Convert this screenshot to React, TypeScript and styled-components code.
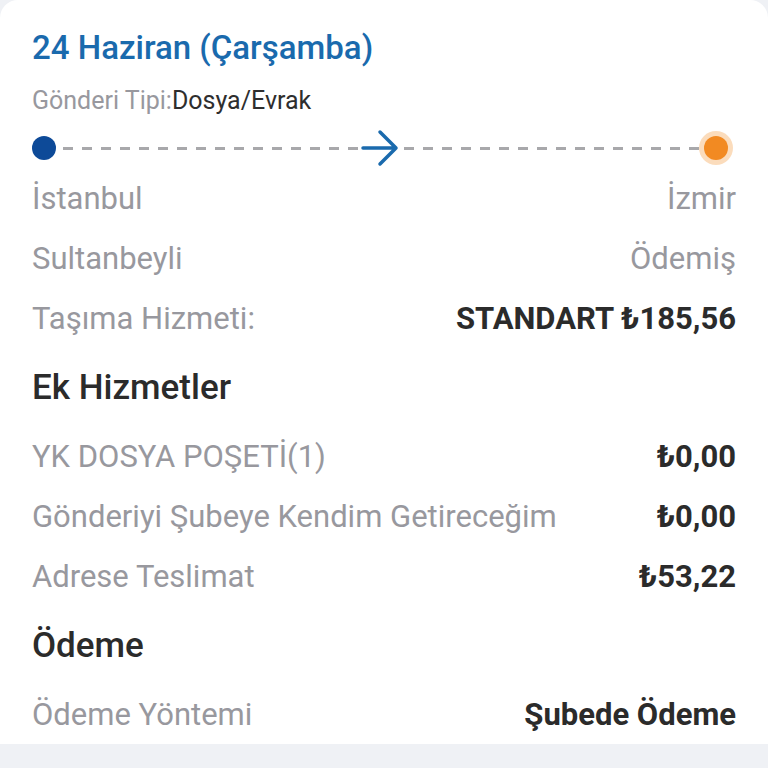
import React from "react";
import styled, { createGlobalStyle } from "styled-components";

const GlobalStyle = createGlobalStyle`
    html, body {
        margin: 0;
        padding: 0;
        background: #eff1f5;
        font-family: Roboto, "Noto Sans", sans-serif;
    }
`;

const Page = styled.div`
    width: 768px;
    height: 768px;
    overflow: hidden;
    background: #eff1f5;
`;

const Card = styled.div`
    background: #ffffff;
    border-radius: 18px 18px 0 0;
    padding: 22px 32px 0;
    display: flex;
    flex-direction: column;
`;

const Title = styled.h1`
    margin: 0;
    font-size: 33px;
    line-height: 52px;
    font-weight: 500;
    color: #1a6aad;
`;

const SubTitle = styled.div`
    margin-top: 12px;
    height: 30px;
    line-height: 30px;
    font-size: 25px;
    color: #2e2e2e;

    span {
        color: #98989e;
    }
`;

const Timeline = styled.div`
    margin-top: 12px;
    height: 40px;
    display: flex;
    align-items: center;
`;

const Dot = styled.div<{ $color: string; $halo?: string }>`
    width: 24px;
    height: 24px;
    border-radius: 50%;
    flex-shrink: 0;
    background: ${(p) => p.$color};
    box-shadow: ${(p) => (p.$halo ? `0 0 0 5px ${p.$halo}` : "none")};
`;

const Dashes = styled.div`
    flex: 1;
    height: 3px;
    margin: 0 4px 0 7px;
    background: repeating-linear-gradient(
        to right,
        #a8a8ab 0 10px,
        transparent 10px 19px
    );
`;

const ArrowIcon = styled.svg`
    width: 38px;
    height: 38px;
    flex-shrink: 0;
    margin: 0 -2px;
`;

const End = styled.div`
    margin-right: 8px;
    display: flex;
`;

const Row = styled.div`
    height: 60px;
    display: flex;
    align-items: center;
    justify-content: space-between;
    font-size: 31px;
`;

const Label = styled.span`
    color: #98989e;
`;

const Value = styled.span<{ $bold?: boolean }>`
    color: ${(p) => (p.$bold ? "#2b2b2b" : "#98989e")};
    font-weight: ${(p) => (p.$bold ? 700 : 400)};
`;

const Heading = styled.h2`
    margin: 0;
    height: 78px;
    display: flex;
    align-items: center;
    font-size: 35px;
    font-weight: 500;
    color: #2b2b2b;
`;

const services = [
    { name: "YK DOSYA POŞETİ(1)", price: "₺0,00" },
    { name: "Gönderiyi Şubeye Kendim Getireceğim", price: "₺0,00" },
    { name: "Adrese Teslimat", price: "₺53,22" },
];

function App() {
    return (
        <Page>
            <GlobalStyle />
            <Card>
                <Title>24 Haziran (Çarşamba)</Title>
                <SubTitle>
                    <span>Gönderi Tipi:</span>Dosya/Evrak
                </SubTitle>

                <Timeline>
                    <Dot $color="#0d4a98" />
                    <Dashes />
                    <ArrowIcon viewBox="0 0 38 38">
                        <path
                            d="M2 19 H35 M19 3 L35 19 L19 35"
                            fill="none"
                            stroke="#1a6aad"
                            strokeWidth="3.5"
                            strokeLinecap="round"
                            strokeLinejoin="round"
                        />
                    </ArrowIcon>
                    <Dashes />
                    <End>
                        <Dot $color="#f28a22" $halo="rgba(242, 138, 34, 0.3)" />
                    </End>
                </Timeline>

                <Row>
                    <Label>İstanbul</Label>
                    <Value>İzmir</Value>
                </Row>
                <Row>
                    <Label>Sultanbeyli</Label>
                    <Value>Ödemiş</Value>
                </Row>
                <Row>
                    <Label>Taşıma Hizmeti:</Label>
                    <Value $bold>STANDART ₺185,56</Value>
                </Row>

                <Heading>Ek Hizmetler</Heading>
                {services.map((s) => (
                    <Row key={s.name}>
                        <Label>{s.name}</Label>
                        <Value $bold>{s.price}</Value>
                    </Row>
                ))}

                <Heading>Ödeme</Heading>
                <Row>
                    <Label>Ödeme Yöntemi</Label>
                    <Value $bold>Şubede Ödeme</Value>
                </Row>
            </Card>
        </Page>
    );
}

export default App;
